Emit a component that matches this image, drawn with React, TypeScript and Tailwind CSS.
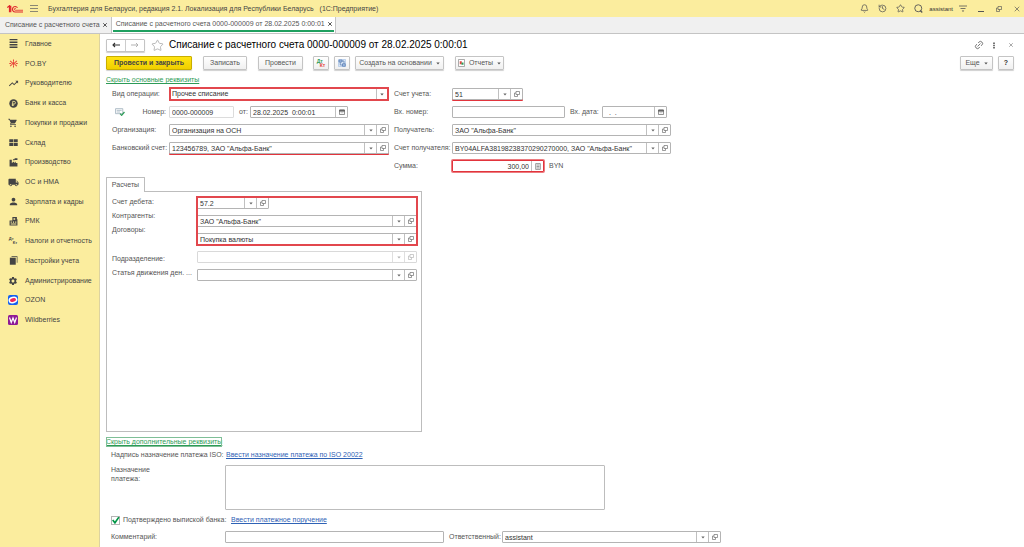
import { ReactNode } from "react";
import { Bell, History, Link2, Search, Star, X } from "lucide-react";
import { MdLocalShipping, MdPerson, MdSettings, MdShoppingCart, MdTrendingUp } from "react-icons/md";

const inputClass = "min-w-0 flex-1 h-full bg-transparent px-[2px] outline-none text-[#333]";

function Caret() {
  return (
    <svg viewBox="0 0 6 4" className="w-[4px] h-[3px]" fill="currentColor">
      <path d="M0.5 0.5h5L3 3.5z" />
    </svg>
  );
}

function OpenIcon() {
  return (
    <svg viewBox="0 0 12 12" className="w-[6px] h-[6px]" fill="none" stroke="currentColor" strokeWidth="1.3">
      <path d="M4 1h7v6H4z" />
      <path d="M4 4H1v7h6V7" />
    </svg>
  );
}

function CalendarIcon() {
  return (
    <svg viewBox="0 0 12 12" className="w-[6px] h-[6px]" fill="none" stroke="currentColor" strokeWidth="1.4">
      <path d="M1 2h10v9H1z" />
      <path d="M1 2h10v2.500H1z" fill="currentColor" />
      <path d="M3 7.500h6" strokeWidth="0.800" />
    </svg>
  );
}

function CalculatorIcon() {
  return (
    <svg viewBox="0 0 10 12" className="w-[6px] h-[7px]" fill="none" stroke="currentColor" strokeWidth="1.1">
      <path d="M1 1h8v10H1z" />
      <path d="M2.5 3.5h5M2.5 6h5M2.5 8.5h5" />
    </svg>
  );
}

function FieldButton({ label, children }: { label: string; children: ReactNode }) {
  return (
    <button
      type="button"
      aria-label={label}
      className="w-[12px] h-full shrink-0 border-l border-[#c0c0c0] flex items-center justify-center"
    >
      {children}
    </button>
  );
}

type FieldProps = {
  id: string;
  value?: string;
  pick?: boolean;
  calendar?: boolean;
  calculator?: boolean;
  disabled?: boolean;
  className?: string;
};

function Field({ id, value = "", pick, calendar, calculator, disabled, className = "w-full border-[#b4b4b4]" }: FieldProps) {
  return (
    <div
      className={
        "flex h-3 items-center rounded-[1px] border bg-white text-[#666] " +
        (disabled ? "opacity-50 " : "") +
        className
      }
    >
      <input
        id={id}
        type="text"
        defaultValue={value}
        disabled={disabled}
        className={inputClass + (calculator ? " text-right" : "")}
      />
      {pick && (
        <>
          <FieldButton label="Выбрать">
            <Caret />
          </FieldButton>
          <FieldButton label="Открыть">
            <OpenIcon />
          </FieldButton>
        </>
      )}
      {calendar && (
        <FieldButton label="Календарь">
          <CalendarIcon />
        </FieldButton>
      )}
      {calculator && (
        <FieldButton label="Калькулятор">
          <CalculatorIcon />
        </FieldButton>
      )}
    </div>
  );
}

function ToolButton({ children, className = "px-[10px]", label }: { children: ReactNode; className?: string; label?: string }) {
  return (
    <button
      type="button"
      aria-label={label}
      className={
        "h-[14px] flex items-center justify-center gap-1 rounded-[1px] border border-[#c4c4c4] bg-gradient-to-b from-white to-[#f0f0f0] shadow-[0_1px_1px_#d0d0d0] whitespace-nowrap " +
        className
      }
    >
      {children}
    </button>
  );
}

function Glyph({ children }: { children: ReactNode }) {
  return (
    <svg viewBox="0 0 16 16" className="w-[9px] h-[9px]" fill="currentColor">
      {children}
    </svg>
  );
}

const sections = [
  {
    name: "Главное",
    icon: (
      <Glyph>
        <path d="M1 0h14v2.4H1zM1 4.5h14v2.4H1zM1 9h14v2.4H1zM1 13.5h14v2.4H1z" />
      </Glyph>
    ),
  },
  {
    name: "PO.BY",
    icon: (
      <svg viewBox="0 0 16 16" className="w-[9px] h-[9px]" fill="none" stroke="#e8473b" strokeWidth="1.8">
        <path d="M8 5V1M8 11v4M5.5 6.5L2 3.5M10.5 6.5L14 3.5M5.5 9.5L2 12.5M10.5 9.5l3.5 3M0.5 8H4M12 8h3.5" />
        <circle cx="8" cy="8" r="1.6" fill="#e8473b" />
      </svg>
    ),
  },
  { name: "Руководителю", icon: <MdTrendingUp className="w-[11px] h-[11px]" /> },
  {
    name: "Банк и касса",
    icon: (
      <Glyph>
        <circle cx="8" cy="8" r="7.5" />
        <path d="M6.5 12.5V4.3h2.6a2.3 2.3 0 0 1 0 4.7H5M5 11h4" fill="none" stroke="#fbed9e" strokeWidth="1.4" />
      </Glyph>
    ),
  },
  { name: "Покупки и продажи", icon: <MdShoppingCart className="w-[10px] h-[10px]" /> },
  {
    name: "Склад",
    icon: (
      <Glyph>
        <path d="M0.5 2h7v5.5h-7zM8.5 2h7v5.5h-7zM0.5 8.7h7v5.3h-7zM8.5 8.7h7v5.3h-7z" />
      </Glyph>
    ),
  },
  {
    name: "Производство",
    icon: (
      <Glyph>
        <path d="M1 15V3h4v6l4-3v3l3-3v3h3v6zM7 2h3v2H7zM10 0.5h5v3h-5z" />
      </Glyph>
    ),
  },
  { name: "ОС и НМА", icon: <MdLocalShipping className="w-[11px] h-[11px]" /> },
  { name: "Зарплата и кадры", icon: <MdPerson className="w-[11px] h-[11px]" /> },
  {
    name: "РМК",
    icon: (
      <Glyph>
        <path d="M6 0h8v4h1v11H1V6h5zM8 2v3h3V2zM3 8v2h2V8zM7 8v2h2V8zM11 8v2h2V8zM3 11.5v2h10v-2z" fillRule="evenodd" />
      </Glyph>
    ),
  },
  {
    name: "Налоги и отчетность",
    icon: (
      <span aria-hidden="true" className="flex flex-col text-[4px] leading-[4px] font-bold">
        <span>Дт</span>
        <span className="pl-[4px]">Кт</span>
      </span>
    ),
  },
  {
    name: "Настройки учета",
    icon: (
      <Glyph>
        <path d="M4.500 0.500H15V12h-1.200V1.700H4.500z" />
        <path d="M1.500 3H12v12.500H1.500z" />
      </Glyph>
    ),
  },
  { name: "Администрирование", icon: <MdSettings className="w-[10px] h-[10px]" /> },
  {
    name: "OZON",
    icon: (
      <svg viewBox="0 0 20 20" className="w-[10px] h-[10px]">
        <rect width="20" height="20" rx="4" fill="#1560f0" />
        <ellipse cx="10" cy="10" rx="9" ry="6.5" fill="#fff" transform="rotate(-15 10 10)" />
        <ellipse cx="10" cy="10" rx="6" ry="3.6" fill="#f0265a" transform="rotate(-15 10 10)" />
      </svg>
    ),
  },
  {
    name: "Wildberries",
    icon: (
      <svg viewBox="0 0 20 20" className="w-[10px] h-[10px]">
        <rect width="20" height="20" rx="3" fill="#8e1a96" />
        <path d="M3 5l3.5 10L10 6l3.5 9L17 5" fill="none" stroke="#fff" strokeWidth="2.4" />
      </svg>
    ),
  },
];

function TitleBar() {
  return (
    <header className="h-[17px] flex items-center bg-[#fbed9e] pl-[7px] pr-[3px] text-[#555]">
      <svg viewBox="0 0 32 16" className="w-4 h-2" fill="none" stroke="#e0262c" strokeWidth="2.4">
        <path d="M0.5 5L5 1.500v13M5 2.500h2.500v12" />
        <path d="M21 5.500a5.500 5.500 0 1 0-4.500 8.500H32" />
        <path d="M18 7a2 2 0 1 0-1.500 3.500H32" strokeWidth="1.600" />
      </svg>
      <button type="button" aria-label="Меню" className="ml-[7px]">
        <svg viewBox="0 0 16 14" className="w-2 h-[7px]" stroke="#666" strokeWidth="1.500">
          <path d="M0 1h16M0 7h16M0 13h16" />
        </svg>
      </button>
      <span className="ml-[10px] flex-1 whitespace-nowrap text-[#444]">
        Бухгалтерия для Беларуси, редакция 2.1. Локализация для Республики Беларусь
        <span className="ml-[6px]">(1С:Предприятие)</span>
      </span>
      <div className="flex items-center gap-[9px]">
        <button type="button" aria-label="Уведомления"><Bell className="w-[9px] h-[9px]" /></button>
        <button type="button" aria-label="История"><History className="w-[9px] h-[9px]" /></button>
        <button type="button" aria-label="Избранное"><Star className="w-[9px] h-[9px]" /></button>
        <button type="button" aria-label="Поиск">
          <svg viewBox="0 0 18 18" className="w-[9px] h-[9px]" fill="none" stroke="currentColor" strokeWidth="1.800">
            <circle cx="8.500" cy="8.500" r="7" />
            <path d="M12.500 13l4 4" strokeWidth="2.600" />
          </svg>
        </button>
      </div>
      <span className="ml-[6px] text-[6px] text-[#333]">assistant</span>
      <button type="button" aria-label="Настройки" className="ml-[6px]">
        <svg viewBox="0 0 16 14" className="w-2 h-[7px]" stroke="#555" strokeWidth="1.600" fill="#555">
          <path d="M0 2h16M3 7h10" />
          <path d="M5.500 11h5L8 14z" stroke="none" />
        </svg>
      </button>
      <button type="button" aria-label="Свернуть" className="ml-[11px] w-[6px] h-[7px] border-b border-[#555]" />
      <button type="button" aria-label="Развернуть" className="ml-[12px]"><OpenIcon /></button>
      <button type="button" aria-label="Закрыть" className="ml-[11px]"><X className="w-2 h-2" /></button>
    </header>
  );
}

function WindowTabs() {
  return (
    <nav className="h-[17px] flex items-stretch bg-[#f0f0f0] border-b border-[#c4c4c4] whitespace-nowrap">
      <div className="flex items-center gap-[2px] pl-[5px] pr-[3px] border-r border-[#c4c4c4]">
        <a href="#list">Списание с расчетного счета</a>
        <button type="button" aria-label="Закрыть вкладку"><X className="w-[6px] h-[6px]" strokeWidth={4} /></button>
      </div>
      <div className="flex bg-white border-r border-[#c4c4c4] px-[1px]">
        <div className="flex items-center gap-[2px] pl-[3px] pr-px mb-[1px] border-b-2 border-b-[#1fa060]">
          <a href="#document">Списание с расчетного счета 0000-000009 от 28.02.2025 0:00:01</a>
          <button type="button" aria-label="Закрыть вкладку"><X className="w-[6px] h-[6px]" strokeWidth={4} /></button>
        </div>
      </div>
    </nav>
  );
}

function Sidebar() {
  return (
    <nav className="w-[100px] shrink-0 bg-[#fbed9e] border-r border-[#ddd3a0]">
      <ul className="h-[296px] flex flex-col text-[#444]">
        {sections.map((section) => (
          <li key={section.name} className="flex-1 flex items-center">
            <a href="#section" className="flex items-center whitespace-nowrap">
              <span className="ml-[7px] w-3 flex justify-center">{section.icon}</span>
              <span className="ml-[6px]">{section.name}</span>
            </a>
          </li>
        ))}
      </ul>
    </nav>
  );
}

function DocumentHeader() {
  return (
    <div className="h-[14px] flex items-center">
      <div className="flex h-[13px] w-[39px] rounded-[1px] border border-[#c4c4c4] shadow-[0_1px_1px_#d0d0d0]">
        <button type="button" aria-label="Назад" className="flex-1 flex items-center justify-center border-r border-[#ccc]">
          <svg viewBox="0 0 16 10" className="w-2 h-[6px]" fill="none" stroke="#333" strokeWidth="2.2">
            <path d="M16 5H2M6 1L2 5l4 4" />
          </svg>
        </button>
        <button type="button" aria-label="Вперед" className="flex-1 flex items-center justify-center">
          <svg viewBox="0 0 16 10" className="w-2 h-[6px]" fill="none" stroke="#aaa" strokeWidth="1.8">
            <path d="M0 5h14M10 1l4 4-4 4" />
          </svg>
        </button>
      </div>
      <button type="button" aria-label="В избранное" className="ml-[6px]">
        <Star className="w-[13px] h-[13px] text-[#aaa]" strokeWidth={1.5} />
      </button>
      <h1 className="ml-[5px] flex-1 text-[10px] text-black whitespace-nowrap">
        Списание с расчетного счета 0000-000009 от 28.02.2025 0:00:01
      </h1>
      <button type="button" aria-label="Ссылка"><Link2 className="w-[10px] h-[10px] -rotate-45" strokeWidth={1.8} /></button>
      <button type="button" aria-label="Дополнительно" className="ml-[9px]">
        <svg viewBox="0 0 4 14" className="w-[2px] h-[7px]" fill="#777">
          <path d="M0 1h4v3H0zM0 5.5h4v3H0zM0 10h4v3H0z" />
        </svg>
      </button>
      <button type="button" aria-label="Закрыть" className="ml-[13px]"><X className="w-[6px] h-[6px]" /></button>
    </div>
  );
}

function Toolbar() {
  return (
    <div className="mt-1 flex items-center">
      <button
        type="button"
        className="h-[14px] w-[86px] rounded-[1px] border border-[#c9ae00] bg-gradient-to-b from-[#ffe411] to-[#f0cf00] shadow-[0_1px_1px_#d0d0d0] font-bold text-[#444] whitespace-nowrap"
      >
        Провести и закрыть
      </button>
      <ToolButton className="ml-[11px] w-11">Записать</ToolButton>
      <ToolButton className="ml-[11px] w-[45px]">Провести</ToolButton>
      <ToolButton className="ml-[10px] w-4" label="Движения документа">
        <span className="flex flex-col text-[5px] leading-[4px] font-bold">
          <span className="text-left text-[#2d9b57]">Дт</span>
          <span className="pl-[3px] text-[#e0443e]">Кт</span>
        </span>
      </ToolButton>
      <ToolButton className="ml-[5px] w-4" label="Структура подчиненности">
        <svg viewBox="0 0 16 16" className="w-2 h-2" fill="#a9c3e6" stroke="#5478b0" strokeWidth="1.400">
          <path d="M1 1h14v14H1z" fill="#dbe7f5" stroke="#a9c3e6" />
          <path d="M2 2h6v4H2zM9 9.500h5.500v5H9z" />
          <path d="M4.500 6v6H9M8 4h4v5.500" fill="none" />
        </svg>
      </ToolButton>
      <ToolButton className="ml-[5px] w-[89px]">
        Создать на основании <Caret />
      </ToolButton>
      <ToolButton className="ml-[11px] w-[49px]">
        <svg viewBox="0 0 14 16" className="w-[7px] h-2" fill="#fff" stroke="#888" strokeWidth="1.4">
          <path d="M1 1h12v14H1z" />
          <path d="M3.500 4.500h4v6h-4z" fill="#e0443e" stroke="none" />
          <path d="M7 7h4v4.500H7z" fill="#2d9b57" stroke="none" />
        </svg>
        Отчеты <Caret />
      </ToolButton>
      <div className="flex-1" />
      <ToolButton className="w-[33px]">
        Еще <Caret />
      </ToolButton>
      <ToolButton className="ml-[5px] w-4 font-bold text-[#333]">?</ToolButton>
    </div>
  );
}

function MainDetails() {
  return (
    <div className="mt-[3px] pl-[6px] grid grid-cols-[57px_minmax(0,220px)_63px_minmax(0,219px)] auto-rows-[12px] gap-y-[6px] items-center whitespace-nowrap">
      <label htmlFor="operation">Вид операции:</label>
      <div className="flex h-[14px] items-center border-2 border-[#e2474d] bg-white">
        <select id="operation" className="min-w-0 flex-1 appearance-none bg-transparent px-[1px] text-[#333] outline-none">
          <option>Прочее списание</option>
        </select>
        <span className="w-[11px] h-full border-l border-[#c0c0c0] flex items-center justify-center">
          <Caret />
        </span>
      </div>
      <label htmlFor="account" className="pl-[5px]">Счет учета:</label>
      <Field id="account" value="51" pick className="w-[71px] border-[#b4b4b4] shadow-[0_1px_0_#e2343c]" />

      <div className="flex items-center justify-between pl-[3px] pr-[3px]">
        <svg viewBox="0 0 18 14" className="w-[10px] h-2" fill="none" stroke="#9aacba" strokeWidth="1.4">
          <path d="M1 1h13v9H1zM3 4h9M3 7h6" />
          <path d="M9 10l3 3 5-6" stroke="#2d9b57" strokeWidth="2.2" />
        </svg>
        <label htmlFor="number">Номер:</label>
      </div>
      <div className="flex items-center">
        <Field id="number" value="0000-000009" className="w-[65px] border-[#dcdcdc]" />
        <label htmlFor="date" className="ml-[5px] w-[11px]">от:</label>
        <Field id="date" value="28.02.2025  0:00:01" calendar className="w-[98px] border-[#b4b4b4]" />
      </div>
      <label htmlFor="in-number" className="pl-[5px]">Вх. номер:</label>
      <div className="flex items-center">
        <Field id="in-number" className="w-[113px] border-[#b4b4b4]" />
        <label htmlFor="in-date" className="ml-[5px] w-8">Вх. дата:</label>
        <Field id="in-date" value="  .  ." calendar className="w-[65px] border-[#b4b4b4]" />
      </div>

      <label htmlFor="organization">Организация:</label>
      <Field id="organization" value="Организация на ОСН" pick />
      <label htmlFor="recipient" className="pl-[5px]">Получатель:</label>
      <Field id="recipient" value={'ЗАО "Альфа-Банк"'} pick />

      <label htmlFor="bank-account">Банковский счет:</label>
      <Field
        id="bank-account"
        value={'123456789, ЗАО "Альфа-Банк"'}
        pick
        className="w-full border-[#b4b4b4] shadow-[0_1px_0_#e2343c]"
      />
      <label htmlFor="recipient-account" className="pl-[5px]">Счет получателя:</label>
      <Field id="recipient-account" value={'BY04ALFA38198238370290270000, ЗАО "Альфа-Банк"'} pick />

      <label htmlFor="amount" className="col-start-3 pl-[5px]">Сумма:</label>
      <div className="flex items-center gap-[5px]">
        <Field id="amount" value="300,00" calculator className="w-[92px] border-[#e2343c] shadow-[0_0_0_1px_#ec7b80]" />
        <span>BYN</span>
      </div>
    </div>
  );
}

function Settlements() {
  return (
    <section className="mt-[5px] w-full max-w-[316px]">
      <div role="tablist" className="flex">
        <button
          type="button"
          role="tab"
          aria-selected="true"
          className="relative z-10 -mb-px h-[15px] w-[39px] rounded-t-[1px] border border-b-0 border-[#bdbdbd] bg-white"
        >
          Расчеты
        </button>
      </div>
      <div className="h-[241px] border border-[#bdbdbd] pl-[5px] pr-1 flex whitespace-nowrap">
        <div className="w-[85px] pt-[3px] leading-[14px] flex flex-col">
          <label htmlFor="debit">Счет дебета:</label>
          <label htmlFor="partner">Контрагенты:</label>
          <label htmlFor="contract">Договоры:</label>
          <label htmlFor="department" className="mt-[15px]">Подразделение:</label>
          <label htmlFor="cash-flow">Статья движения ден. ...</label>
        </div>
        <div className="flex-1 pt-[5px] flex flex-col gap-[6px]">
          <div className="flex flex-col gap-[6px] outline-2 -outline-offset-1 outline-[#e2474d]">
            <Field id="debit" value="57.2" pick className="w-[72px] border-[#b4b4b4]" />
            <Field id="partner" value={'ЗАО "Альфа-Банк"'} pick />
            <Field id="contract" value="Покупка валюты" pick />
          </div>
          <Field id="department" pick disabled />
          <Field id="cash-flow" pick />
        </div>
      </div>
    </section>
  );
}

function ExtraDetails() {
  return (
    <div className="pl-[5px] whitespace-nowrap">
      <div className="mt-[3px] flex items-center h-[10px]">
        <span className="w-[115px]">Надпись назначение платежа ISO:</span>
        <a href="#iso" className="text-[#2f62b5] underline">Ввести назначение платежа по ISO 20022</a>
      </div>
      <div className="mt-[5px] flex">
        <label htmlFor="purpose" className="w-[114px] leading-[9px]">
          Назначение
          <br />
          платежа:
        </label>
        <textarea id="purpose" className="h-[45px] w-[380px] resize-none rounded-[1px] border border-[#bdbdbd] outline-none" />
      </div>
      <div className="mt-[5px] flex items-center h-[10px]">
        <span className="relative w-[9px] h-[9px] flex">
          <input
            id="confirmed"
            type="checkbox"
            defaultChecked
            className="w-[9px] h-[9px] appearance-none border border-[#b4b4b4] bg-white"
          />
          <svg viewBox="0 0 16 16" className="pointer-events-none absolute inset-0" fill="none" stroke="#009646" strokeWidth="3">
            <path d="M3 7l4 5 7-10" />
          </svg>
        </span>
        <label htmlFor="confirmed" className="ml-[3px] w-[108px]">Подтверждено выпиской банка:</label>
        <a href="#order" className="text-[#2f62b5] underline">Ввести платежное поручение</a>
      </div>
      <div className="mt-[6px] flex items-center">
        <label htmlFor="comment" className="w-[114px]">Комментарий:</label>
        <Field id="comment" className="w-[219px] border-[#b4b4b4]" />
        <label htmlFor="responsible" className="ml-[5px] w-[53px]">Ответственный:</label>
        <Field id="responsible" value="assistant" pick className="w-[219px] border-[#b4b4b4]" />
      </div>
    </div>
  );
}

export default function App() {
  return (
    <div className="min-h-screen flex flex-col bg-white text-[7px] leading-[10px] text-[#555] font-['Liberation_Sans',Arial,sans-serif]">
      <TitleBar />
      <WindowTabs />
      <div className="flex flex-1">
        <Sidebar />
        <main className="min-w-0 flex-1 pl-[6px] pr-[10px] pt-1 pb-[3px]">
          <DocumentHeader />
          <Toolbar />
          <div className="mt-[5px] h-[10px] flex">
            <a href="#main" className="text-[#2d9b57] underline">Скрыть основные реквизиты</a>
          </div>
          <MainDetails />
          <Settlements />
          <div className="mt-[5px] h-[10px] flex">
            <a href="#extra" className="text-[#2d9b57] underline outline outline-[#7fbf97] -outline-offset-1">
              Скрыть дополнительные реквизиты
            </a>
          </div>
          <ExtraDetails />
        </main>
      </div>
    </div>
  );
}
